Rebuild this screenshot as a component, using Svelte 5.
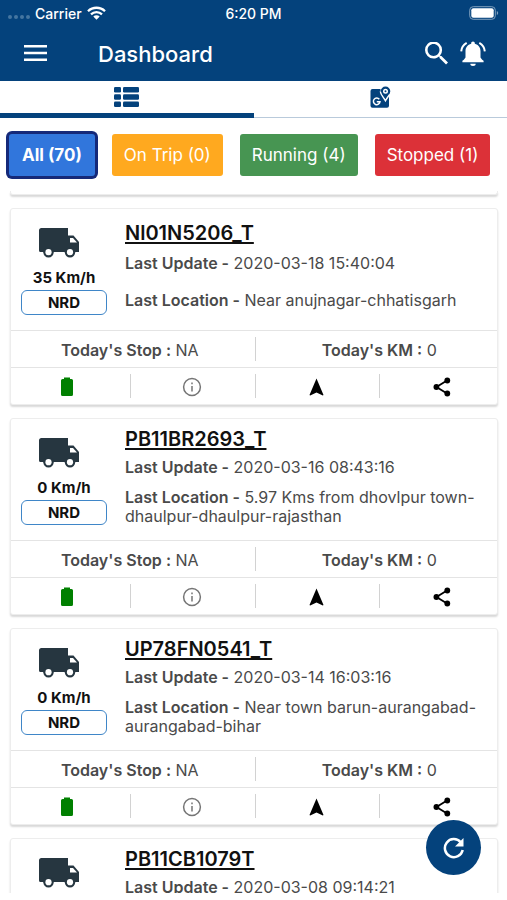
<script>
  const filters = [
    { label: 'All (70)', tone: 'all' },
    { label: 'On Trip (0)', tone: 'trip' },
    { label: 'Running (4)', tone: 'running' },
    { label: 'Stopped (1)', tone: 'stopped' }
  ];

  const vehicles = [
    { name: 'Nl01N5206_T', speed: 35, update: '2020-03-18 15:40:04', place: 'Near anujnagar-chhatisgarh' },
    { name: 'PB11BR2693_T', speed: 0, update: '2020-03-16 08:43:16', place: '5.97 Kms from dhovlpur town-dhaulpur-dhaulpur-rajasthan' },
    { name: 'UP78FN0541_T', speed: 0, update: '2020-03-14 16:03:16', place: 'Near town barun-aurangabad-aurangabad-bihar' },
    { name: 'PB11CB1079T', speed: 0, update: '2020-03-08 09:14:21', place: 'Near town barun-aurangabad-aurangabad-bihar' }
  ];

  let active = $state('all');
</script>

<div class="app">
  <div class="status">
    <div class="carrier">
      <span class="dots"><i></i><i></i><i></i><i></i></span>
      <span>Carrier</span>
      <svg width="19" height="14" viewBox="0 0 19 14" fill="none" stroke="#fff" stroke-width="2.3">
        <path d="M1 5.2a12.2 12.2 0 0 1 17 0M4 8.4a7.9 7.9 0 0 1 11 0" />
        <path d="M9.500 13.800 6.300 10.600a4.600 4.600 0 0 1 6.400 0z" fill="#fff" stroke="none" />
      </svg>
    </div>
    <span>6:20 PM</span>
    <svg class="power" width="30" height="14" viewBox="0 0 30 14">
      <rect x=".7" y=".7" width="25.600" height="12.600" rx="3.500" fill="none" stroke="#7f9fbd" stroke-width="1" />
      <rect x="2.300" y="2.300" width="22.400" height="9.400" rx="2" fill="#fff" />
      <path d="M27.800 5v4q1.400-.6 1.400-2t-1.400-2" fill="#7f9fbd" />
    </svg>
  </div>

  <header>
    <button class="plain menu" aria-label="Menu">
      <svg width="23" height="17" viewBox="0 0 23 17" fill="#fff"><path d="M0 0h23v2.500H0zM0 6.800h23v2.500H0zM0 13.600h23v2.500H0z" /></svg>
    </button>
    <h1>Dashboard</h1>
    <button class="plain" aria-label="Search">
      <svg width="23" height="23" viewBox="3 3.800 17.490 17.490" fill="#fff"><path d="M15.500 14h-.79l-.28-.27A6.470 6.470 0 0 0 16 9.500 6.500 6.500 0 1 0 9.500 16c1.610 0 3.090-.59 4.230-1.570l.27.28v.79l5 4.990L20.490 19zm-6 0C7.010 14 5 11.990 5 9.500S7.010 5 9.500 5 14 7.010 14 9.500 11.990 14 9.500 14z" transform="translate(0 .4)" /></svg>
    </button>
    <button class="plain bell" aria-label="Alerts">
      <svg width="26" height="26" viewBox="0 0 26 26" fill="#fff">
        <path d="M13 .5c1.100 0 1.800.8 1.800 1.700v.6c3.600.8 5.700 3.700 5.700 7.500v6.200l1.700 2.200 1.400 1.100v1.400H2.400v-1.400l1.400-1.100 1.700-2.200v-6.200c0-3.800 2.100-6.700 5.700-7.500v-.6C11.200 1.300 11.900.5 13 .5zM10.300 22.700h5.400a2.700 2.200 0 0 1-5.400 0z" />
        <path d="M6.700 1.800C3.300 3.800 1.500 6.500 1.200 10.300M19.300 1.800c3.400 2 5.200 4.700 5.500 8.500" fill="none" stroke="#fff" stroke-width="2" />
      </svg>
    </button>
  </header>

  <nav>
    <button class="plain tab current" aria-label="List view">
      <svg width="25" height="20" viewBox="0 0 25 20" fill="#04427c">
        <rect width="7" height="5.600" rx="1.300" /><rect x="9" width="16" height="5.600" rx="1.300" />
        <rect y="7.200" width="7" height="5.600" rx="1.300" /><rect x="9" y="7.200" width="16" height="5.600" rx="1.300" />
        <rect y="14.400" width="7" height="5.600" rx="1.300" /><rect x="9" y="14.400" width="16" height="5.600" rx="1.300" />
      </svg>
    </button>
    <button class="plain tab" aria-label="Map view">
      <svg width="21" height="22" viewBox="0 0 21 22">
        <path d="M2.500 3h8c-.3 4 2.500 7.500 5 11l3.500-4.500v10.200a2 2 0 0 1-2 2H2.500a2 2 0 0 1-2-2V5a2 2 0 0 1 2-2z" fill="#04427c" />
        <path d="M9.300 13.300A3.300 3.300 0 1 0 10 15.700H6.800" fill="none" stroke="#fff" stroke-width="1.500" />
        <path d="M15.500.5a4.800 4.800 0 0 1 4.800 4.800c0 2.800-2.800 5.400-4.800 8.400-2-3-4.800-5.600-4.800-8.400A4.800 4.800 0 0 1 15.500.5z" fill="#04427c" />
        <circle cx="15.500" cy="5.200" r="2.500" fill="#fff" />
        <circle cx="15.500" cy="5.200" r="1" fill="#04427c" />
        <path d="M10.300 5.500c.3 3.300 3.200 5.700 5.200 9.300 1.200-2.500 2.800-4.200 4-6.300" fill="none" stroke="#fff" stroke-width="1.400" />
      </svg>
    </button>
  </nav>

  <div class="filters">
    {#each filters as f}
      <button class="chip {f.tone}" class:selected={active === f.tone} onclick={() => (active = f.tone)}>{f.label}</button>
    {/each}
    <span class="chip more"></span>
  </div>

  <main>
    <div class="card passed"></div>
    {#each vehicles as v}
      <article class="card">
        <div class="body">
          <div class="side">
            <svg width="41" height="30" viewBox="0 0 41 30">
              <path d="M2.500 0H29v7.500h5.500L40 14v10H1.500Q0 24 0 22.500v-20Q0 0 2.500 0z" fill="#263640" />
              <path d="M31 10h3l4 4.600h-7z" fill="#fff" />
              <circle cx="9.500" cy="24.200" r="5.200" fill="#263640" /><circle cx="9.500" cy="24.200" r="3.100" fill="#fff" />
              <circle cx="31" cy="24.200" r="5.200" fill="#263640" /><circle cx="31" cy="24.200" r="3.100" fill="#fff" />
            </svg>
            <strong class="speed">{v.speed} Km/h</strong>
            <span class="badge">NRD</span>
          </div>
          <div class="info">
            <a href="#vehicle">{v.name}</a>
            <p><b>Last Update -</b> {v.update}</p>
            <p><b>Last Location -</b> {v.place}</p>
          </div>
        </div>
        <div class="row">
          <div class="cells">
            <div class="cell"><span><b>Today's Stop :</b> NA</span></div>
            <div class="cell"><span><b>Today's KM :</b> 0</span></div>
          </div>
        </div>
        <div class="row">
          <div class="cells">
            <button class="plain cell" aria-label="Battery">
              <svg width="12" height="19" viewBox="0 0 12 19" fill="#008000"><path d="M3 .5h6V2h1.500Q12 2 12 3.500v14q0 1.500-1.500 1.500h-9Q0 19 0 17.500v-14Q0 2 1.500 2H3z" /></svg>
            </button>
            <button class="plain cell" aria-label="Details">
              <svg width="20" height="20" viewBox="0 0 20 20" fill="none" stroke="#757575" stroke-width="1.500"><circle cx="10" cy="10" r="8.400" /><path d="M10 9v5.500M10 5.500v1.700" /></svg>
            </button>
            <button class="plain cell" aria-label="Navigate">
              <svg width="15" height="18" viewBox="0 0 15 18"><path d="M7.500.5 14.500 17l-.7.500-6.300-3-6.300 3-.7-.5z" /></svg>
            </button>
            <button class="plain cell" aria-label="Share">
              <svg width="18" height="20" viewBox="0 0 18 20"><path d="M14 3.500 3.500 10 14 16.500" fill="none" stroke="#000" stroke-width="1.800" /><circle cx="14.300" cy="3.500" r="2.900" /><circle cx="3.400" cy="10" r="2.900" /><circle cx="14.300" cy="16.500" r="2.900" /></svg>
            </button>
          </div>
        </div>
      </article>
    {/each}
  </main>

  <button class="refresh" aria-label="Refresh">
    <svg width="22" height="22" viewBox="0 0 22 22"><path d="M17.700 5.200A9 9 0 1 0 19.700 13" fill="none" stroke="#fff" stroke-width="2.500" /><path d="M20.500 1v8.500H12z" fill="#fff" /></svg>
  </button>
</div>

<style>
  :global(body) { margin: 0; }
  .app {
    position: relative;
    display: flex;
    flex-direction: column;
    height: 100vh;
    box-sizing: border-box;
    padding-bottom: 7px;
    background: #fff;
    font-family: Inter, "Liberation Sans", sans-serif;
    font-size: 15px;
    color: #4a4a4a;
  }
  svg { display: block; flex: none; }
  .plain { display: flex; align-items: center; justify-content: center; margin: 0; padding: 0; border: 0; background: none; }
  .status {
    display: grid;
    grid-template-columns: 1fr auto 1fr;
    align-items: center;
    height: 26px;
    padding: 0 8px;
    background: #04427c;
    color: #fff;
    font-size: 14px;
    font-weight: 500;
  }
  .carrier { display: flex; align-items: center; gap: 5px; }
  .dots { display: flex; gap: 2px; padding-top: 8px; }
  .dots i { width: 4px; height: 4px; border-radius: 50%; background: #4575a0; }
  .power { justify-self: end; }
  header { display: flex; align-items: center; height: 55px; padding: 0 21px 0 24px; background: #04427c; }
  .menu { width: 23px; margin-right: 51px; }
  h1 { flex: 1; margin: 0; font-size: 22px; font-weight: 500; line-height: 28px; color: #fff; }
  .bell { margin-left: 12px; }
  nav { display: flex; height: 37px; }
  .tab { flex: 1; box-sizing: border-box; padding-bottom: 4px; border-bottom: 1px solid #b9cadb; }
  .current { padding-bottom: 0; border-bottom: 5px solid #04427c; }
  .filters { display: flex; flex: none; gap: 17px; height: 57px; padding: 16px 0 0 9px; overflow: hidden; }
  .chip { flex: none; height: 42px; padding: 0 12px; border: 0; border-radius: 3px; color: #fff; font-family: inherit; font-size: 17px; }
  .all { background: #3176dc; }
  .trip { background: #ffa91f; }
  .running { background: #479552; }
  .stopped { background: #dc3138; }
  .more { background: #fafafa; }
  .selected { padding: 0 13px; box-shadow: 0 0 0 3px #152979; font-weight: 700; }
  main { flex: 1; min-height: 0; overflow: hidden; padding: 0 9px 0 10px; }
  .card { box-sizing: border-box; margin-bottom: 13px; border: 1px solid #ededed; border-radius: 3px; background: #fff; box-shadow: 0 2px 2px #d8d8d8; }
  .passed { height: 4px; border-top: 0; border-radius: 0 0 3px 3px; }
  .body { display: flex; min-height: 121px; box-sizing: border-box; }
  .side { display: flex; flex: none; flex-direction: column; align-items: center; width: 86px; padding: 19px 17px 0 10px; color: #111; }
  .side svg { margin-right: 10px; }
  .speed { margin-top: 10px; font-size: 15px; font-weight: 700; line-height: 20px; }
  .badge { box-sizing: border-box; width: 86px; height: 25px; margin-top: 2px; border: 1px solid #3f86c8; border-radius: 6px; font-weight: 700; line-height: 23px; text-align: center; }
  .info { display: grid; flex: 1; grid-template-rows: auto auto auto; align-content: stretch; padding: 0 16px 13px 1px; }
  .info a { align-self: center; padding: 8px 0 6px; color: #111; font-size: 20px; font-weight: 600; line-height: 24px; text-decoration: underline; text-decoration-thickness: 2px; text-underline-offset: 2px; text-decoration-skip-ink: none; }
  p { margin: 0; font-size: 16px; line-height: 19px; }
  p:nth-child(2) { padding-bottom: 11px; }
  b { font-weight: 600; }
  .row { height: 37px; box-sizing: border-box; border-top: 1px solid #e4e4e4; font-size: 16px; }
  .cells { display: flex; height: 100%; margin: 0 -7px 0 -6px; }
  .cell { position: relative; display: flex; flex: 1 1 0; align-items: center; justify-content: center; padding-top: 1px; }
  .cell + .cell::before { content: ""; position: absolute; left: 0; top: 6px; bottom: 6px; width: 1px; background: #d2d2d2; }
  .refresh { position: absolute; right: 26px; bottom: 25px; display: flex; align-items: center; justify-content: center; width: 55px; height: 55px; padding: 0; border: 0; border-radius: 50%; background: #04427c; }
</style>
